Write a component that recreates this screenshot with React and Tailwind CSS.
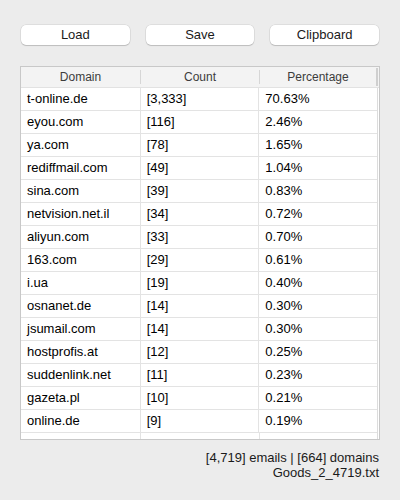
import React from 'react';

const rows = [
  ['t-online.de', '[3,333]', '70.63%'],
  ['eyou.com', '[116]', '2.46%'],
  ['ya.com', '[78]', '1.65%'],
  ['rediffmail.com', '[49]', '1.04%'],
  ['sina.com', '[39]', '0.83%'],
  ['netvision.net.il', '[34]', '0.72%'],
  ['aliyun.com', '[33]', '0.70%'],
  ['163.com', '[29]', '0.61%'],
  ['i.ua', '[19]', '0.40%'],
  ['osnanet.de', '[14]', '0.30%'],
  ['jsumail.com', '[14]', '0.30%'],
  ['hostprofis.at', '[12]', '0.25%'],
  ['suddenlink.net', '[11]', '0.23%'],
  ['gazeta.pl', '[10]', '0.21%'],
  ['online.de', '[9]', '0.19%'],
];

function Button({ children }) {
  return (
    <button className="h-[20px] flex-1 rounded-[5px] bg-white text-[13px] text-[#1a1a1a] shadow-[0_0_0_0.5px_rgba(0,0,0,0.12),0_1px_1px_rgba(0,0,0,0.15)]">
      {children}
    </button>
  );
}

export default function App() {
  return (
    <div
      className="w-[400px] h-[500px] bg-[#ececec] px-[20px] pt-[25px]"
      style={{ fontFamily: '"Liberation Sans", Arial, sans-serif' }}
    >
      <div className="flex gap-[16px] px-[1px]">
        <Button>Load</Button>
        <Button>Save</Button>
        <Button>Clipboard</Button>
      </div>

      <div className="mt-[21px] h-[374px] border border-[#c8c8c8] bg-white overflow-hidden flex flex-col">
        <div className="flex h-[21px] shrink-0 bg-[#f3f3f3] border-b border-[#e2e2e2] text-[12px] text-[#3c3c3c]">
          <div className="w-[120px] flex items-center justify-center border-r border-[#d6d6d6] my-[3px]">Domain</div>
          <div className="w-[119px] flex items-center justify-center border-r border-[#d6d6d6] my-[3px]">Count</div>
          <div className="w-[118px] flex items-center justify-center border-r-2 border-[#cfcfcf] my-[1px]">Percentage</div>
        </div>
        <div className="flex-1 w-[357px] border-r border-[#dcdcdc]">
          {rows.map((r) => (
            <div key={r[0]} className="flex h-[23px] border-b border-[#e3e3e3] text-[13px] text-black">
              <div className="w-[120px] pl-[6px] flex items-center border-r border-[#e3e3e3]">{r[0]}</div>
              <div className="w-[119px] pl-[6px] flex items-center border-r border-[#e3e3e3]">{r[1]}</div>
              <div className="w-[118px] pl-[6px] flex items-center">{r[2]}</div>
            </div>
          ))}
          <div className="flex h-[10px]">
            <div className="w-[120px] border-r border-[#e3e3e3]"></div>
            <div className="w-[119px] border-r border-[#e3e3e3]"></div>
          </div>
        </div>
      </div>

      <div className="mt-[10px] text-right text-[13px] leading-[15px] text-[#1a1a1a] pr-[1px]">
        <div>[4,719] emails | [664] domains</div>
        <div>Goods_2_4719.txt</div>
      </div>
    </div>
  );
}
